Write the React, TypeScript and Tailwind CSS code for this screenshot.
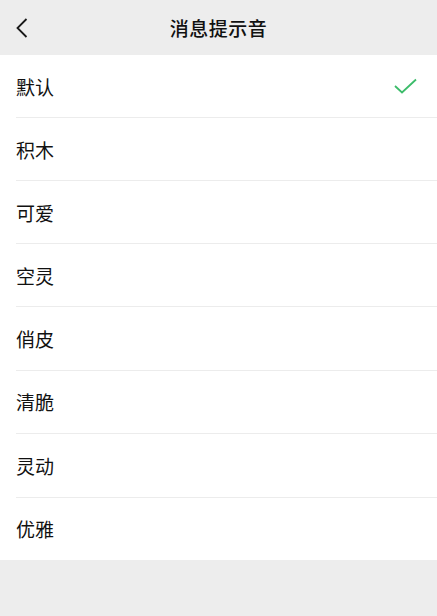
const SOUNDS = ["默认", "积木", "可爱", "空灵", "俏皮", "清脆", "灵动", "优雅"];

export default function App() {
  const selected = "默认";

  return (
    <div
      className="flex h-[616px] w-[437px] flex-col bg-[#ededed] text-[#111111]"
      style={{ fontFamily: '"Noto Sans CJK SC", "Noto Sans", sans-serif' }}
    >
      {/* Header */}
      <div className="relative flex h-[55px] shrink-0 items-center justify-center">
        <button className="absolute left-[14px] top-[17px] p-0" aria-label="返回">
          <svg width="16" height="22" viewBox="0 0 16 22" fill="none">
            <path d="M12.5 2 L3.5 11 L12.5 20" stroke="#191919" strokeWidth="1.8" />
          </svg>
        </button>
        <h1 className="text-[19px] leading-none font-medium tracking-[0.5px]">消息提示音</h1>
      </div>

      {/* Options */}
      <ul className="bg-white">
        {SOUNDS.map((name, i) => {
          const last = i === SOUNDS.length - 1;
          return (
            <li key={name} className="pl-4">
              <div
                className={
                  "flex items-center justify-between pr-5 " +
                  (last ? "h-[62.5px]" : i >= 4 ? "h-[63.5px] border-b border-[#ececec]" : "h-[63px] border-b border-[#ececec]")
                }
              >
                <span className="text-[19px] leading-none">{name}</span>
                {name === selected && (
                  <svg width="23" height="16" viewBox="0 0 23 16" fill="none">
                    <path d="M1 8 L8 14.5 L22 1.5" stroke="#3cbc6a" strokeWidth="1.8" />
                  </svg>
                )}
              </div>
            </li>
          );
        })}
      </ul>
    </div>
  );
}
